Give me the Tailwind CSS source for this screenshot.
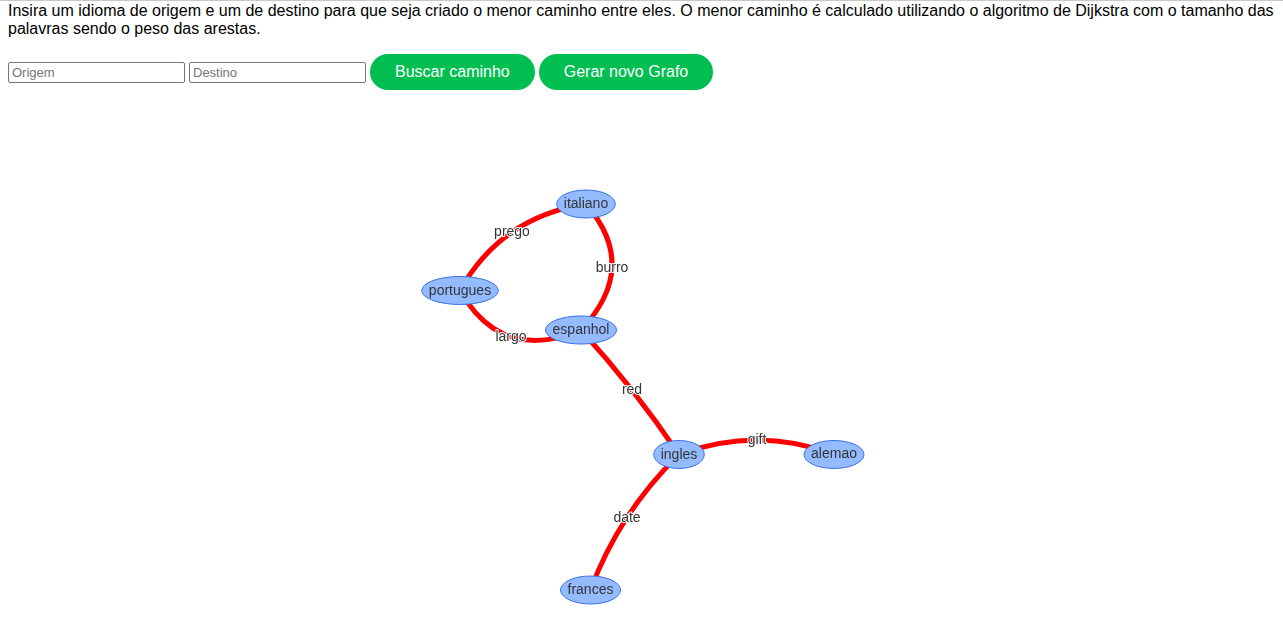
<!DOCTYPE html>
<html lang="pt-BR">
<head>
<meta charset="utf-8">
<title>Menor caminho entre idiomas</title>
<script src="https://cdn.jsdelivr.net/npm/@tailwindcss/browser@4"></script>
</head>
<body class="bg-white font-['Liberation_Sans',Arial,sans-serif] text-base leading-[18px] text-black">
<main class="border-t border-[#c8c8c8] px-2">
  <p class="pt-px">Insira um idioma de origem e um de destino para que seja criado o menor caminho entre eles. O menor caminho é calculado utilizando o algoritmo de Dijkstra com o tamanho das palavras sendo o peso das arestas.</p>
  <form class="mt-4 flex flex-wrap items-center gap-1">
    <input type="text" aria-label="Origem" placeholder="Origem" class="h-[21px] w-[177px] rounded-[2px] border border-[#767676] px-[3px] text-[13px] leading-4 placeholder:text-[#757575]">
    <input type="text" aria-label="Destino" placeholder="Destino" class="h-[21px] w-[177px] rounded-[2px] border border-[#767676] px-[3px] text-[13px] leading-4 placeholder:text-[#757575]">
    <button type="button" class="h-9 rounded-[18px] bg-[#00bf50] px-[25px] text-white">Buscar caminho</button>
    <button type="button" class="h-9 rounded-[18px] bg-[#00bf50] px-[25px] text-white">Gerar novo Grafo</button>
  </form>
  <div class="mt-[90px] flex justify-center">
    <svg width="481" height="430" viewBox="401 180 481 430" role="img" aria-label="Grafo de idiomas" class="text-sm will-change-transform">
      <g fill="none" stroke="#ff0000" stroke-width="5">
        <path d="M460 290.5Q501 217 586 204"/>
        <path d="M586 204Q640.5 267 581 330"/>
        <path d="M460 290.5Q501.5 363.5 581 330"/>
        <path d="M581 330Q634 388 679 454.5"/>
        <path d="M679 454.5Q757.5 425.5 834 454.5"/>
        <path d="M679 454.5Q619 513 590.5 590"/>
      </g>
      <g fill="#343434" stroke="#ffffff" stroke-width="2" stroke-linejoin="round" paint-order="stroke" text-anchor="middle">
        <text x="512" y="236">prego</text>
        <text x="612" y="272">burro</text>
        <text x="511" y="341">largo</text>
        <text x="632" y="394">red</text>
        <text x="757" y="444">gift</text>
        <text x="627" y="522">date</text>
      </g>
      <g fill="#94baff" stroke="#3b70ea" stroke-width="1">
        <ellipse cx="586" cy="204" rx="29.3" ry="14"/>
        <ellipse cx="460" cy="290.5" rx="38.3" ry="14"/>
        <ellipse cx="581" cy="330" rx="35.5" ry="14"/>
        <ellipse cx="679" cy="454.5" rx="25.3" ry="14"/>
        <ellipse cx="834" cy="454.5" rx="30" ry="14"/>
        <ellipse cx="590.5" cy="590" rx="30" ry="14"/>
      </g>
      <g fill="#343434" text-anchor="middle">
        <text x="586" y="208">italiano</text>
        <text x="460" y="295">portugues</text>
        <text x="581" y="334">espanhol</text>
        <text x="679" y="459">ingles</text>
        <text x="834" y="458">alemao</text>
        <text x="590.5" y="594">frances</text>
      </g>
    </svg>
  </div>
</main>
</body>
</html>
